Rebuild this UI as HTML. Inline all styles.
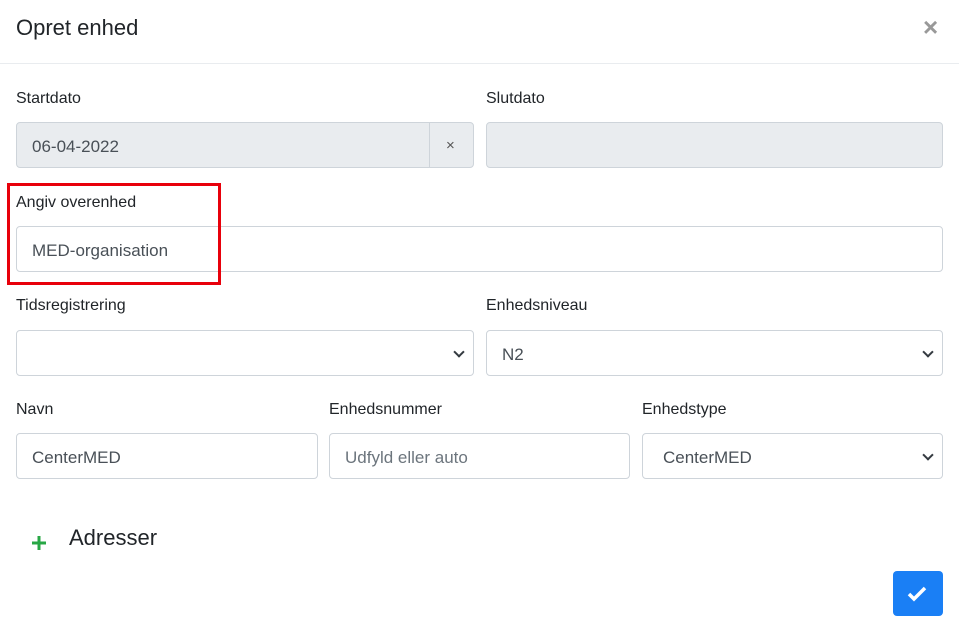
<!DOCTYPE html>
<html><head><style>
body{margin:0;width:959px;height:623px;background:#fff;font-family:"Liberation Sans",sans-serif;color:#212529;position:relative;overflow:hidden}
.a{position:absolute}
.lbl{font-size:16px;color:#212529}
.in{position:absolute;box-sizing:border-box;border:1px solid #ced4da;border-radius:4px;height:46px;font-size:17px;color:#495057;padding:14px 15px 0;line-height:20px}
.dis{background:#e9ecef}
.sel::after{content:"";position:absolute;right:10px;top:17px;width:6px;height:6px;border-right:2px solid #343a40;border-bottom:2px solid #343a40;transform:rotate(45deg)}
</style></head><body>
<div class="a" style="left:16px;top:15px;font-size:22px">Opret enhed</div>
<div class="a" style="left:923px;top:12px;font-size:26px;color:#999;font-weight:bold">×</div>
<div class="a" style="left:0;top:63px;width:959px;height:1px;background:#e9ecef"></div>

<div class="a lbl" style="left:16px;top:90px">Startdato</div>
<div class="in dis" style="left:16px;top:122px;width:458px">06-04-2022</div>
<div class="a" style="left:429px;top:123px;width:1px;height:44px;background:#ced4da"></div>
<div class="a" style="left:446px;top:137px;font-size:15px;color:#555">×</div>
<div class="a lbl" style="left:486px;top:90px">Slutdato</div>
<div class="in dis" style="left:486px;top:122px;width:457px"></div>

<div class="a lbl" style="left:16px;top:194px">Angiv overenhed</div>
<div class="in" style="left:16px;top:226px;width:927px">MED-organisation</div>
<div class="a" style="left:7px;top:183px;width:208px;height:96px;border:3px solid #e8000b"></div>

<div class="a lbl" style="left:16px;top:297px">Tidsregistrering</div>
<div class="in sel" style="left:16px;top:330px;width:458px"></div>
<div class="a lbl" style="left:486px;top:297px">Enhedsniveau</div>
<div class="in sel" style="left:486px;top:330px;width:457px">N2</div>

<div class="a lbl" style="left:16px;top:401px">Navn</div>
<div class="in" style="left:16px;top:433px;width:302px">CenterMED</div>
<div class="a lbl" style="left:329px;top:401px">Enhedsnummer</div>
<div class="in" style="left:329px;top:433px;width:301px;color:#6c757d">Udfyld eller auto</div>
<div class="a lbl" style="left:642px;top:401px">Enhedstype</div>
<div class="in sel" style="left:642px;top:433px;width:301px;padding-left:20px">CenterMED</div>

<svg class="a" style="left:31px;top:535px" width="16" height="16"><path d="M8 1v14M1 8h14" stroke="#28a745" stroke-width="3"/></svg>
<div class="a" style="left:69px;top:525px;font-size:22px">Adresser</div>

<div class="a" style="left:893px;top:571px;width:50px;height:45px;background:#1a7ff5;border-radius:4px"></div>
<svg class="a" style="left:906px;top:584px" width="24" height="20"><path d="M3 10l5 5 11-11" stroke="#fff" stroke-width="3.5" fill="none"/></svg>
</body></html>
